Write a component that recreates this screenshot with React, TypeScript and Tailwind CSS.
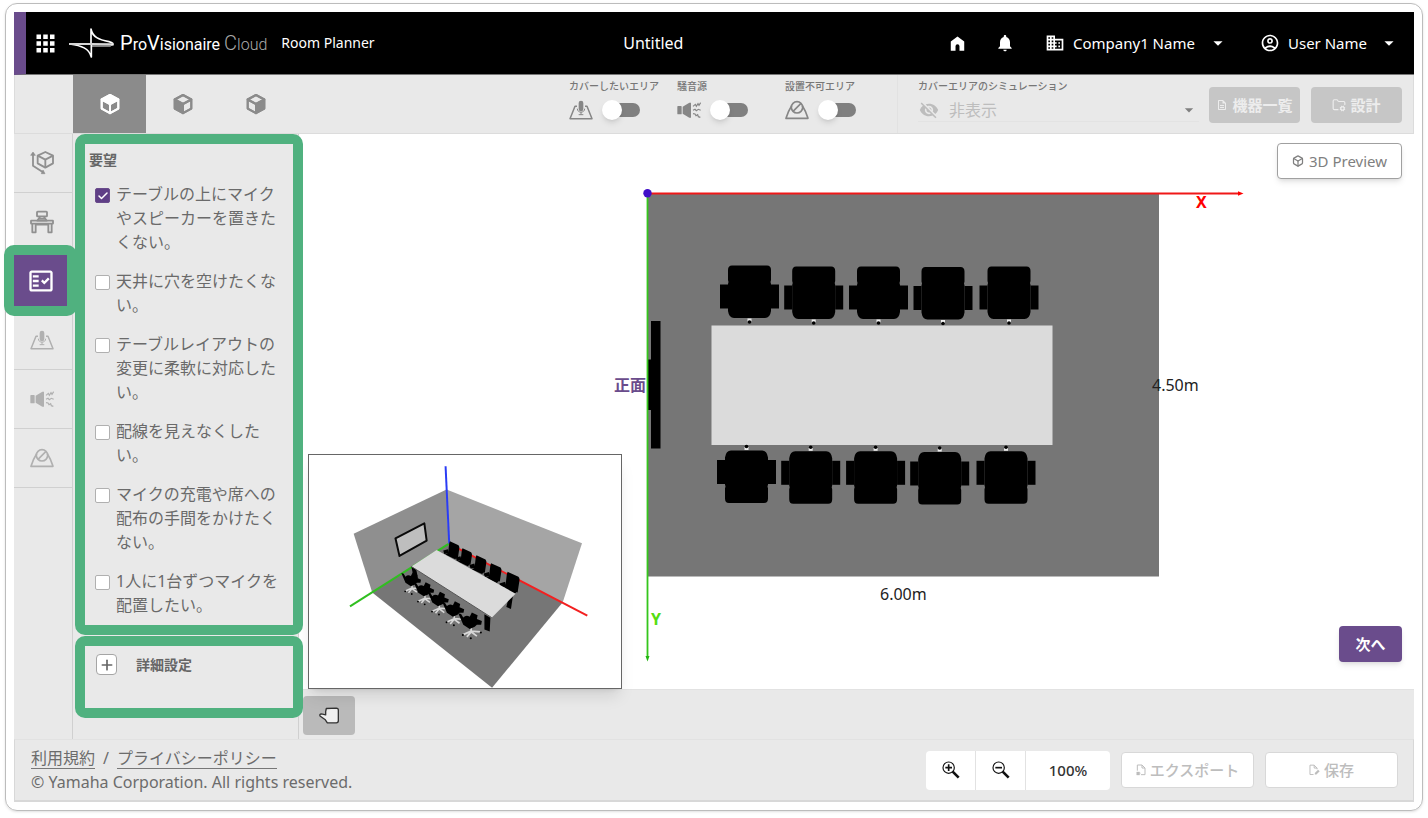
import React, { useState } from "react";
import {
  MdApps,
  MdArrowDropDown,
  MdDomain,
  MdNotifications,
  MdOutlineAccountCircle,
  MdOutlineDescription,
  MdOutlineFactCheck,
  MdVisibilityOff,
} from "react-icons/md";
import { Box, Check, FolderCog, Plus } from "lucide-react";

type IconProps = { className?: string };

function HomeIcon({ className }: IconProps) {
  return (
    <svg viewBox="0 0 24 24" fill="currentColor" className={className} aria-hidden="true">
      <path d="M3.500 21V9.600L12 3l8.500 6.600V21h-6v-5.500a2.500 2.500 0 0 0-5 0V21z" />
    </svg>
  );
}

function BrandMark({ className }: IconProps) {
  return (
    <svg viewBox="0 0 135 92" fill="none" className={className} aria-hidden="true">
      <path d="M66 52 V4 C70 28 90 36 120 42 C132 45 134 49 130 53" stroke="#fff" strokeWidth="5" strokeLinejoin="round" />
      <path d="M2 49 C38 54 60 62 67 88 V52" stroke="#fff" strokeWidth="5" strokeLinejoin="round" />
      <path d="M1 49 H66 L130 50" stroke="#d6d6d6" strokeWidth="6" strokeLinecap="round" />
      <path d="M66 55 H124 L131 50" stroke="#fff" strokeWidth="3" />
    </svg>
  );
}

function ViewCube({ face }: { face: "top" | "left" | "right" }) {
  return (
    <svg viewBox="0 0 24 24" className="size-6" fill="none" stroke="currentColor" strokeWidth="2" strokeLinejoin="round" aria-hidden="true">
      <path d="M12 3 20.300 7.500V16.600L12 21.200 3.700 16.600V7.500z" />
      <path d="M3.700 7.500 12 12l8.300-4.500L12 3z" fill={face === "top" ? "currentColor" : "none"} />
      <path d="M3.700 7.500 12 12v9.200l-8.300-4.600z" fill={face === "left" ? "currentColor" : "none"} />
      <path d="M20.300 7.500 12 12v9.200l8.300-4.600z" fill={face === "right" ? "currentColor" : "none"} />
    </svg>
  );
}

function RoomSizeIcon({ className }: IconProps) {
  return (
    <svg viewBox="0 0 72 72" fill="none" stroke="currentColor" strokeWidth="5.500" strokeLinejoin="round" className={className} aria-hidden="true">
      <path d="M46 3 69 14v23L46 50 23 37V14z" />
      <path d="M23 14 46 26 69 14M46 26v24" />
      <path d="M9 6v38l30 20" />
      <path d="M2 13 9 3l7 10zM34 68l11 0-6-11z" fill="currentColor" strokeWidth="2" />
    </svg>
  );
}

function FurnitureIcon({ className }: IconProps) {
  return (
    <svg viewBox="0 0 72 72" fill="none" stroke="currentColor" strokeWidth="5.500" strokeLinejoin="round" className={className} aria-hidden="true">
      <rect x="21" y="5" width="30" height="14" rx="2" />
      <path d="M30 20 22 32h28l-8-12M28 26h16" />
      <rect x="3" y="32" width="66" height="9" rx="1" />
      <path d="M7 42v25h10V42M55 42v25h10V42M17 44h38" />
    </svg>
  );
}

function CoverAreaIcon({ className }: IconProps) {
  return (
    <svg viewBox="0 0 72 60" fill="none" stroke="currentColor" strokeWidth="4.500" strokeLinejoin="round" className={className} aria-hidden="true">
      <path d="M24 19H18L3 56h66L54 19h-6" />
      <rect x="29" y="2" width="14" height="32" rx="7" fill="currentColor" stroke="none" />
      <path d="M25 26c0 14 22 14 22 0M36 36v8M29 44h14" strokeWidth="3" />
    </svg>
  );
}

function NoiseIcon({ className }: IconProps) {
  return (
    <svg viewBox="0 0 72 60" fill="none" stroke="currentColor" strokeWidth="3.500" className={className} aria-hidden="true">
      <rect x="1" y="18" width="13" height="25" rx="2" fill="currentColor" stroke="none" />
      <path d="M17 20 37 8h5v45h-5L17 41z" fill="currentColor" stroke="none" />
      <path d="M48 19l7-6 3 6 5-8 3 5 5-8M48 31l6-3 4 4 6-4 7 3M48 41l6 1 3 5 5-3 2 6 6 2" />
    </svg>
  );
}

function NoInstallIcon({ className }: IconProps) {
  return (
    <svg viewBox="0 0 72 60" fill="none" stroke="currentColor" strokeWidth="5" strokeLinejoin="round" className={className} aria-hidden="true">
      <path d="M20 17C12 29 7 42 3 55h66c-4-13-9-26-17-38" />
      <circle cx="36" cy="22" r="17" />
      <path d="M24 34 48 10" />
    </svg>
  );
}

function ExportIcon({ className }: IconProps) {
  return (
    <svg viewBox="0 0 30 36" fill="none" stroke="currentColor" strokeWidth="3" className={className} aria-hidden="true">
      <path d="M4 20V3h14l9 9v20H15M18 3v9h9" />
      <path d="M2 24h9v9H2zM11 28h4" fill="currentColor" strokeWidth="1" />
    </svg>
  );
}

function SaveIcon({ className }: IconProps) {
  return (
    <svg viewBox="0 0 34 36" fill="none" stroke="currentColor" strokeWidth="3" className={className} aria-hidden="true">
      <path d="M14 32H3V3h13l9 9v4M16 3v9h9" />
      <path d="M18 32v-5l10-10 5 5-10 10z" fill="currentColor" stroke="none" />
    </svg>
  );
}

function Magnifier({ plus }: { plus?: boolean }) {
  return (
    <svg viewBox="0 0 54 54" fill="none" stroke="#111" className="size-[18px]" aria-hidden="true">
      <circle cx="20" cy="20" r="17" strokeWidth="3.500" />
      <path d="M32 32 50 50" strokeWidth="8" />
      <path d={plus ? "M10 20h20M20 10v20" : "M10 20h20"} strokeWidth="5" />
    </svg>
  );
}

function HandIcon() {
  return (
    <svg viewBox="0 0 60 50" className="h-[17px] w-5" fill="#efefef" stroke="#333" strokeWidth="4" strokeLinejoin="round" aria-hidden="true">
      <path d="M20 13 22 4l30-1c4 0 6 2 6 6v32c0 4-2 6-6 6H25L19 38 4 27c-3-3-1-7 3-7l13 3z" />
    </svg>
  );
}

function Toggle({ label, icon }: { label: string; icon: React.ReactNode }) {
  return (
    <label className="flex w-[108px] flex-col gap-2 whitespace-nowrap text-[10px] leading-3 font-medium text-[#777]">
      {label}
      <span className="flex h-5 items-center gap-[13px] text-[#868686]">
        {icon}
        <input
          type="checkbox"
          role="switch"
          className="relative h-[14px] w-[34px] appearance-none rounded-full bg-[#808080] before:absolute before:-top-[3px] before:-left-1 before:size-5 before:rounded-full before:bg-white before:shadow-md checked:before:left-4"
        />
      </span>
    </label>
  );
}

const requests = [
  "テーブルの上にマイクやスピーカーを置きたくない。",
  "天井に穴を空けたくない。",
  "テーブルレイアウトの変更に柔軟に対応したい。",
  "配線を見えなくしたい。",
  "マイクの充電や席への配布の手間をかけたくない。",
  "1人に1台ずつマイクを配置したい。",
];

function Request({ text, initial }: { text: string; initial: boolean }) {
  const [on, setOn] = useState(initial);
  return (
    <label className="flex items-start gap-[6px] text-base leading-6 text-[#6a6a6a]">
      <span className="mt-[6px] grid size-[15px] shrink-0">
        <input
          type="checkbox"
          checked={on}
          onChange={() => setOn(!on)}
          className="col-start-1 row-start-1 size-[15px] appearance-none rounded-xs border border-[#b0b0b0] bg-white checked:border-[#6a4c8c] checked:bg-[#5f3f86]"
        />
        {on && <Check className="pointer-events-none col-start-1 row-start-1 size-3 place-self-center text-white" strokeWidth={3} />}
      </span>
      <span>{text}</span>
    </label>
  );
}

function PlanChair({ x, y, flip }: { x: number; y: number; flip?: boolean }) {
  return (
    <g transform={flip ? `translate(${x} ${y}) scale(1 -1)` : `translate(${x} ${y})`}>
      <rect x="-29.500" y="-7.500" width="8" height="24" />
      <rect x="21.500" y="-7.500" width="8" height="24" />
      <path d="M-21.500-22q0-4.500 4-4.500h35q4 0 4 4.500v10l-.5 2 .5 2v27q-1 7-6 7h-31q-5 0-6-7v-27l.5-2-.5-2z" />
      <path d="M-2 26.500h4v3h-4z" fill="#eee" />
      <circle cx="0" cy="30" r="1.800" />
    </g>
  );
}

const topChairs = [
  [749.5, 292],
  [813.7, 293],
  [878.5, 293],
  [943, 293.5],
  [1009, 293],
];
const bottomChairs = [
  [746.5, 476.500],
  [810.7, 477.300],
  [875.6, 477.300],
  [939.7, 478],
  [1006, 477.300],
];

function FloorPlan() {
  return (
    <svg viewBox="299 134 1115 555" className="size-full" role="img" aria-label="Floor plan">
      <rect x="647.500" y="193" width="511.500" height="383.500" fill="#767676" />
      <path d="M651 321h9.500v127.500H651V410h-3v-50.500h3z" />
      <rect x="711.500" y="325.500" width="341" height="119.500" fill="#dbdbdb" />
      {topChairs.map(([x, y]) => (
        <PlanChair key={x} x={x} y={y} />
      ))}
      {bottomChairs.map(([x, y]) => (
        <PlanChair key={x} x={x} y={y} flip />
      ))}
      <path d="M647.500 193.500V658" stroke="#35c61c" strokeWidth="1.800" />
      <path d="M645.500 656h4l-2 5.500z" fill="#22b511" />
      <path d="M647.500 193.500H1240" stroke="#f01818" strokeWidth="1.800" />
      <path d="M1238 191.300v4.400l5.500-2.200z" fill="#f00" />
      <circle cx="647.500" cy="193.300" r="4.200" fill="#4010c8" />
      <g fontSize="16">
        <text x="1196" y="208" fontWeight="700" fill="#f00">X</text>
        <text x="651" y="625" fontWeight="700" fill="#55dd10">Y</text>
        <text x="614" y="391" fontWeight="700" fill="#6a4c8c">正面</text>
        <text x="1152" y="391" fill="#222">4.50m</text>
        <text x="880" y="600" fill="#222">6.00m</text>
      </g>
    </svg>
  );
}

const farChairs = [
  [450, 304, 1],
  [488, 325, 1],
  [530, 346, 1.05],
  [574, 370, 1.1],
  [624, 396, 1.25],
];
const nearChairs = [
  [336, 416, 0.9],
  [375, 446, 0.92],
  [418, 475, 0.95],
  [463, 505, 1],
  [514, 540, 1.08],
];

function RoomPreview() {
  return (
    <svg viewBox="26 44 939 702" className="block size-full" role="img" aria-label="3D room">
      <path d="M440 148 160 281 216 458 446 310z" fill="#8f8f8f" />
      <path d="M440 148 848 310 790 488 446 310z" fill="#a5a5a5" />
      <path d="M446 310 790 488 577 745 216 458z" fill="#767676" />
      <path d="M286 295 373 250 380 302 298 348z" fill="#bebebe" stroke="#0a0a0a" strokeWidth="6" strokeLinejoin="round" />
      <path d="M437 78 448 312" stroke="#2a3cf5" strokeWidth="6" />
      <path d="M446 312 149 500" stroke="#30bf20" strokeWidth="6" />
      <path d="M448 312 864 528" stroke="#f32020" strokeWidth="6" />
      {farChairs.map(([x, y, s]) => (
        <g key={x} transform={`translate(${x} ${y}) scale(${s})`}>
          <path d="M0 0 26 12Q30 16 28 24L24 50-6 40-2 6z" />
          <path d="M-20 28l14-4 3 12-14 2zM-14 40l16-6 20 14-6 6z" />
        </g>
      ))}
      <path d="M334 380l14 6 6 30-14-6zM626 478l14-10-6 40-14-6zM554 524l18 10-2 42-16-6z" />
      {nearChairs.map(([x, y, s]) => (
        <g key={x} transform={`translate(${x} ${y}) scale(${s})`}>
          <path d="M0 18V38M0 32-22 42M0 32 26 34M0 34-12 48M0 34 16 46" stroke="#d8d8d8" strokeWidth="5" fill="none" />
          <path d="M-36-18-28-16-22-6Q-14-14-4-8L2-20 18-12 16-2 30 4 28 14 16 14 10 20-4 26-22 14z" />
          <circle cx="-23" cy="43" r="3" />
          <circle cx="-1" cy="52" r="3" />
          <circle cx="27" cy="36" r="3" />
        </g>
      ))}
      <path d="M334 380 410 330 648 462 576 534z" fill="#dbdbdb" />
      <path d="M334 380 576 534" stroke="#555" strokeWidth="3" />
    </svg>
  );
}

const sideItems = [
  { label: "部屋", icon: <RoomSizeIcon className="size-6" />, tone: "text-[#909090]" },
  { label: "家具", icon: <FurnitureIcon className="size-6" />, tone: "text-[#909090]" },
  { label: "要望", icon: <MdOutlineFactCheck className="size-7" />, tone: "text-white", active: true },
  { label: "カバーしたいエリア", icon: <CoverAreaIcon className="h-5 w-6" />, tone: "text-[#b0b0b0]" },
  { label: "騒音源", icon: <NoiseIcon className="h-5 w-6" />, tone: "text-[#b0b0b0]" },
  { label: "設置不可エリア", icon: <NoInstallIcon className="h-5 w-6" />, tone: "text-[#b0b0b0]" },
];

export default function App() {
  return (
    <div className="flex min-h-screen flex-col bg-white pt-[3px] pr-[5px] pb-[7px] pl-[5px] font-['Noto_Sans','Noto_Sans_CJK_JP',sans-serif]">
      <div className="flex flex-1 flex-col rounded-xl border border-[#bcbcbc] p-2 shadow-sm">
        <header className="flex h-[63px] items-center border-b border-l-12 border-b-[#777] border-l-[#6a4c8c] bg-black pr-[14px] text-white">
          <button type="button" aria-label="Apps" className="ml-[6px]">
            <MdApps className="size-[27px]" />
          </button>
          <a href="#" className="ml-[10px] flex items-center">
            <BrandMark className="h-8 w-[45px]" />
            <span className="ml-[6px] font-['Roboto',sans-serif] text-base leading-6 whitespace-nowrap">
              <span className="text-xl">P</span>ro<span className="text-xl">V</span>isionaire
            </span>
            <span className="ml-1 font-['Roboto',sans-serif] text-base leading-6 font-light text-[#aaa]">
              <span className="text-xl">C</span>loud
            </span>
          </a>
          <span className="ml-[14px] text-sm whitespace-nowrap">Room Planner</span>
          <h1 className="flex-1 pr-4 text-center text-base">Untitled</h1>
          <nav className="flex items-center whitespace-nowrap">
            <button type="button" aria-label="Home" className="mr-7">
              <HomeIcon className="size-[19px]" />
            </button>
            <button type="button" aria-label="Notifications" className="mr-[30px]">
              <MdNotifications className="size-5" />
            </button>
            <button type="button" className="mr-[31px] flex w-[184px] items-center gap-2 text-[15px]">
              <MdDomain className="size-5" />
              Company1 Name
              <MdArrowDropDown className="ml-auto size-[22px]" />
            </button>
            <button type="button" className="flex w-[140px] items-center gap-2 text-[15px]">
              <MdOutlineAccountCircle className="size-5" />
              User Name
              <MdArrowDropDown className="ml-auto size-[22px]" />
            </button>
          </nav>
        </header>

        <div className="flex h-[59px] border border-t-0 border-[#dcdcdc] bg-[#e9e9e9]">
          <div className="ml-[58px] flex text-[#8b8b8b]">
            <button type="button" aria-label="Top view" className="grid w-[73px] place-items-center bg-[#8b8b8b] text-white">
              <ViewCube face="top" />
            </button>
            <button type="button" aria-label="Left view" className="grid w-[73px] place-items-center">
              <ViewCube face="left" />
            </button>
            <button type="button" aria-label="Right view" className="grid w-[73px] place-items-center">
              <ViewCube face="right" />
            </button>
          </div>
          <div className="ml-auto flex pt-[5px]">
            <Toggle label="カバーしたいエリア" icon={<CoverAreaIcon className="h-5 w-6" />} />
            <Toggle label="騒音源" icon={<NoiseIcon className="h-5 w-6" />} />
            <Toggle label="設置不可エリア" icon={<NoInstallIcon className="h-5 w-6" />} />
          </div>
          <div className="ml-1 w-[302px] border-l border-[#e2e2e2] pt-[5px] pl-5">
            <label htmlFor="simulation" className="block text-[10px] leading-3 font-medium text-[#777]">
              カバーエリアのシミュレーション
            </label>
            <div className="mt-[6px] grid h-6 items-center border-b border-[#e3e3e3] text-[#bdbdbd]">
              <MdVisibilityOff className="pointer-events-none col-start-1 row-start-1 ml-px size-5" />
              <select id="simulation" disabled className="col-start-1 row-start-1 appearance-none bg-transparent pl-[31px] text-base leading-6 opacity-100">
                <option>非表示</option>
              </select>
              <MdArrowDropDown className="pointer-events-none col-start-1 row-start-1 size-5 justify-self-end text-[#808080]" />
            </div>
          </div>
          <div className="mr-[11px] ml-[10px] flex gap-[11px] pt-3 text-[15px] font-bold text-[#ededed]">
            <button type="button" disabled className="flex h-9 w-[91px] items-center justify-center gap-1 rounded-sm bg-[#c6c6c6]">
              <MdOutlineDescription className="size-3" />
              機器一覧
            </button>
            <button type="button" disabled className="flex h-9 w-[91px] items-center justify-center gap-1 rounded-sm bg-[#c6c6c6]">
              <FolderCog className="size-[14px]" />
              設計
            </button>
          </div>
        </div>

        <div className="flex flex-1">
          <aside className="w-[59px] shrink-0 border-r border-[#d0d0d0] bg-[#e9e9e9]">
            {sideItems.map((item) => (
              <div key={item.label} className="relative">
                <button
                  type="button"
                  aria-label={item.label}
                  className={`flex h-[59px] w-full items-center border-b border-[#d0d0d0] pr-1 ${item.active ? "bg-[#6a4c8c] pl-[13px]" : "pl-4"} ${item.tone}`}
                >
                  {item.icon}
                </button>
                {item.active && (
                  <span className="pointer-events-none absolute -top-[7px] -right-[5px] -bottom-[5px] -left-[10px] z-10 rounded-[10px] border-10 border-[#50b17f]" />
                )}
              </div>
            ))}
          </aside>

          <div className="w-[226px] shrink-0 border-r border-[#d0d0d0] bg-[#e9e9e9]">
            <section className="relative pt-4 pr-4 pb-[18px] pl-4">
              <h2 className="text-sm leading-5 font-bold text-[#666]">要望</h2>
              <div className="mt-3 flex flex-col gap-[15px] pl-[6px]">
                {requests.map((text, i) => (
                  <Request key={text} text={text} initial={i === 0} />
                ))}
              </div>
              <span className="pointer-events-none absolute inset-y-0 -right-[5px] left-[2px] z-10 rounded-[10px] border-10 border-[#50b17f]" />
            </section>
            <section className="relative mt-px h-[82px] pt-[18px] pl-[23px]">
              <button type="button" className="flex items-center gap-[19px] text-sm font-bold text-[#666]">
                <span className="grid size-[21px] place-items-center rounded-sm border border-[#a5a5a5] bg-white">
                  <Plus className="size-4" strokeWidth={2.5} />
                </span>
                詳細設定
              </button>
              <span className="pointer-events-none absolute inset-y-0 -right-[5px] left-[2px] z-10 rounded-[10px] border-10 border-[#50b17f]" />
            </section>
          </div>

          <main className="flex min-w-0 flex-1 flex-col">
            <div className="relative min-h-[555px] flex-1">
              <div className="absolute inset-0">
                <FloorPlan />
              </div>
              <div className="absolute bottom-0 left-[9px] h-[235px] w-[314px] border border-[#666] bg-white shadow-lg">
                <RoomPreview />
              </div>
              <button
                type="button"
                className="absolute top-[9px] right-3 flex h-9 w-[125px] items-center justify-center gap-[5px] rounded-sm border border-[#a0a0a0] bg-white text-[15px] text-[#808080] shadow-md"
              >
                <Box className="size-3" strokeWidth={2.5} />
                3D Preview
              </button>
              <button
                type="button"
                className="absolute right-3 bottom-[27px] h-9 w-[63px] rounded-sm bg-[#6a4c8c] text-[15px] font-bold text-white shadow-md"
              >
                次へ
              </button>
            </div>
            <div className="flex h-[50px] items-end border-t border-[#e2e2e2] bg-[#e9e9e9] pb-1 pl-1">
              <button type="button" aria-label="Pan" className="grid h-[39px] w-[52px] place-items-center rounded-sm bg-[#bababa]">
                <HandIcon />
              </button>
            </div>
          </main>
        </div>

        <footer className="flex h-[63px] items-center border border-b-2 border-[#d8d8d8] border-t-[#e2e2e2] bg-[#e9e9e9] pr-[15px] pl-4 text-[#6c6c6c]">
          <div className="text-base leading-5">
            <div className="flex gap-2">
              <a href="#" className="border-b border-[#777]">利用規約</a>
              <span>/</span>
              <a href="#" className="border-b border-[#777]">プライバシーポリシー</a>
            </div>
            <p className="mt-[3px]">© Yamaha Corporation. All rights reserved.</p>
          </div>
          <div className="ml-auto flex h-[39px] divide-x divide-[#e2e2e2] overflow-hidden rounded-sm bg-white">
            <button type="button" aria-label="Zoom in" className="grid w-[50px] place-items-center">
              <Magnifier plus />
            </button>
            <button type="button" aria-label="Zoom out" className="grid w-[50px] place-items-center">
              <Magnifier />
            </button>
            <button type="button" className="w-[84px] text-[15px] font-medium text-[#333]">
              100%
            </button>
          </div>
          <button
            type="button"
            disabled
            className="ml-[11px] flex h-9 w-[133px] items-center justify-center gap-1 rounded-sm border border-[#d8d8d8] bg-white text-[15px] font-medium text-[#bdbdbd]"
          >
            <ExportIcon className="h-3 w-[10px]" />
            エクスポート
          </button>
          <button
            type="button"
            disabled
            className="ml-[11px] flex h-9 w-[133px] items-center justify-center gap-1 rounded-sm border border-[#d8d8d8] bg-white text-[15px] font-medium text-[#bdbdbd]"
          >
            <SaveIcon className="h-3 w-[11px]" />
            保存
          </button>
        </footer>
      </div>
    </div>
  );
}
